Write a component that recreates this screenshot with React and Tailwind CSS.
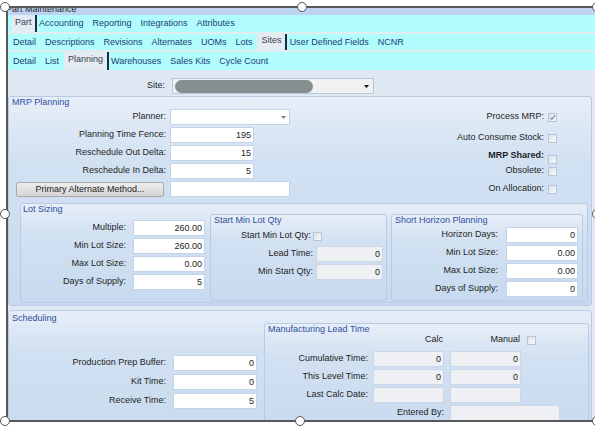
import React from "react";

const tabRows = [
  { items: ["Part", "Accounting", "Reporting", "Integrations", "Attributes"], active: 0, h: "h-[17px]" },
  {
    items: ["Detail", "Descriptions", "Revisions", "Alternates", "UOMs", "Lots", "Sites", "User Defined Fields", "NCNR"],
    active: 6,
    h: "h-[16px]",
  },
  { items: ["Detail", "List", "Planning", "Warehouses", "Sales Kits", "Cycle Count"], active: 2, h: "h-[18px]" },
];

const handles = [
  "left-[0px] top-[2px]",
  "left-[297px] top-[2px]",
  "left-[592px] top-[2px]",
  "left-[0px] top-[209px]",
  "left-[592px] top-[209px]",
  "left-[0px] top-[416px]",
  "left-[295px] top-[416px]",
  "left-[592px] top-[416px]",
];

function TabRow({ items, active, h }) {
  return (
    <div className={`${h} shrink-0 bg-[#b1fcfc] flex items-stretch pl-[4px] whitespace-nowrap`}>
      {items.map((t, i) => {
        const isActive = i === active;
        let pad = "px-[4.5px]";
        if (isActive) pad = i === 0 ? "pl-[3px] pr-[3px]" : "pl-[4.5px] pr-[3.5px]";
        else if (i === 0) pad = "pl-[1px] pr-[4.5px]";
        else if (i === active + 1) pad = "pl-[2.5px] pr-[4.5px]";
        return (
          <div
            key={t + i}
            className={`flex items-center ${pad} ${
              isActive
                ? "bg-[#e4ebf3] border-r-2 border-[#1b2c48] text-[#3a3f4a] pb-[2px]"
                : "text-[#1d3c78] pt-[1px]"
            }`}
          >
            {t}
          </div>
        );
      })}
    </div>
  );
}

function Group({ title, className = "", titleClass = "h-[10px] leading-[10px] pl-[3px]", children }) {
  return (
    <div
      className={`border border-[#b8cbe2] rounded-[3px] bg-linear-to-b from-[#e7eef8] via-[#d2e1f2] via-30% to-[#c8daef] ${className}`}
    >
      <div className={`${titleClass} text-[#2d4f9e] whitespace-nowrap`}>{title}</div>
      {children}
    </div>
  );
}

function Box({ w, value = "", disabled }) {
  return (
    <div
      className={`${w} h-[16px] shrink-0 border ${
        disabled ? "bg-[#eef0f3] border-[#cbd7e6]" : "bg-white border-[#c4d4e8]"
      } text-right pr-[2px] leading-[14px] text-[#222]`}
    >
      {value}
    </div>
  );
}

function Check({ checked, className = "" }) {
  return (
    <div
      className={`w-[9px] h-[9px] shrink-0 border border-[#b7c5d6] bg-linear-to-br from-[#dde3ea] to-[#f7f9fb] flex items-center justify-center ${className}`}
    >
      {checked && (
        <svg width="7" height="7" viewBox="0 0 7 7">
          <path d="M1 3.6 L2.8 5.4 L6 1.4" fill="none" stroke="#7d8ea8" strokeWidth="1.3" />
        </svg>
      )}
    </div>
  );
}

export default function App() {
  return (
    <div className="relative w-[595px] h-[426px] overflow-hidden bg-white font-['Liberation_Sans',Arial,sans-serif] text-[9px] text-[#1e1e1e]">
      <div className="ml-[6px] mt-[6px] w-[589px] h-[416px] border-l-2 border-t-2 border-b-2 border-[#585858] flex flex-col overflow-hidden">
        {/* window title, mostly cut off */}
        <div className="h-[7px] shrink-0 bg-[#bed2f1] overflow-hidden">
          <div className="-mt-[3px] -ml-[2px] leading-[9px] text-[#2a2a2a] whitespace-nowrap">Part Maintenance</div>
        </div>

        {/* tabs */}
        <TabRow {...tabRows[0]} />
        <div className="h-[2px] shrink-0 bg-[#e3ecee]" />
        <TabRow {...tabRows[1]} />
        <div className="h-[2px] shrink-0 bg-[#e3ecee]" />
        <TabRow {...tabRows[2]} />

        {/* content */}
        <div className="flex-1 bg-[#dfe8f3] pt-[8px] pr-[3px]">
          <div className="flex items-center h-[16px] gap-[7px]">
            <div className="w-[157px] text-right">Site:</div>
            <div className="w-[202px] h-[16px] bg-[#f1f1f1] border border-[#b6c7dc] flex items-center pl-[2px] pr-[4px]">
              <div className="w-[138px] h-[13px] rounded-full bg-[#868f8f]" />
              <div className="flex-1" />
              <svg width="5" height="3" viewBox="0 0 5 3">
                <path d="M0 0h5L2.5 3z" fill="#111" />
              </svg>
            </div>
          </div>

          {/* MRP Planning */}
          <Group title="MRP Planning" className="mt-[2px] pb-[2px]">
            <div className="flex justify-between mt-[2px]">
              <div className="flex flex-col gap-[2px]">
                <div className="flex items-center h-[16px] gap-[4px]">
                  <div className="w-[157px] text-right">Planner:</div>
                  <div className="w-[120px] h-[16px] bg-white border border-[#c4d4e8] flex items-center justify-end pr-[3px]">
                    <svg width="5" height="3" viewBox="0 0 5 3">
                      <path d="M0 0h5L2.5 3z" fill="#6c84a6" />
                    </svg>
                  </div>
                </div>
                {[
                  ["Planning Time Fence:", "195"],
                  ["Reschedule Out Delta:", "15"],
                  ["Reschedule In Delta:", "5"],
                ].map(([l, v]) => (
                  <div key={l} className="flex items-center h-[16px] gap-[4px]">
                    <div className="w-[157px] text-right">{l}</div>
                    <Box w="w-[84px]" value={v} />
                  </div>
                ))}
                <div className="flex items-center h-[16px]">
                  <button className="ml-[7px] w-[148px] h-[15px] border border-[#a9a9a9] rounded-[2px] bg-linear-to-b from-[#eeeeee] to-[#d5d5d5] text-[9px] leading-[13px] text-[#222]">
                    Primary Alternate Method...
                  </button>
                  <div className="ml-[6px]">
                    <Box w="w-[120px]" />
                  </div>
                </div>
              </div>

              <div className="flex flex-col items-end pt-[3px] mr-[34px]">
                <div className="flex items-center h-[10px] gap-[4px]">
                  <span>Process MRP:</span>
                  <Check checked />
                </div>
                <div className="flex items-center h-[10px] gap-[4px] mt-[11px]">
                  <span>Auto Consume Stock:</span>
                  <Check />
                </div>
                <div className="flex items-center h-[10px] gap-[4px] mt-[8px]">
                  <span className="font-bold">MRP Shared:</span>
                  <Check className="mt-[6px]" />
                </div>
                <div className="flex items-center h-[10px] gap-[4px] mt-[5px]">
                  <span>Obsolete:</span>
                  <Check />
                </div>
                <div className="flex items-center h-[10px] gap-[4px] mt-[8px]">
                  <span>On Allocation:</span>
                  <Check />
                </div>
              </div>
            </div>

            {/* Lot Sizing */}
            <Group
              title="Lot Sizing"
              className="mt-[6px] ml-[11px] mr-[3px] pb-[1px]"
              titleClass="h-[10px] leading-[10px] pl-[2px]"
            >
              <div className="flex">
                <div className="pt-[6px] flex flex-col gap-[2px]">
                  {[
                    ["Multiple:", "260.00"],
                    ["Min Lot Size:", "260.00"],
                    ["Max Lot Size:", "0.00"],
                    ["Days of Supply:", "5"],
                  ].map(([l, v]) => (
                    <div key={l} className="flex items-center h-[16px] gap-[7px]">
                      <div className="w-[105px] text-right">{l}</div>
                      <Box w="w-[72px]" value={v} />
                    </div>
                  ))}
                </div>

                <Group title="Start Min Lot Qty" className="ml-[5px] w-[177px] h-[87px]">
                  <div className="mt-[3px] flex flex-col gap-[2px]">
                    <div className="flex items-center h-[16px]">
                      <div className="w-[100px] text-right">Start Min Lot Qty:</div>
                      <Check className="ml-[2px]" />
                    </div>
                    <div className="flex items-center h-[16px] gap-[3px]">
                      <div className="w-[102px] text-right">Lead Time:</div>
                      <Box w="w-[67px]" value="0" disabled />
                    </div>
                    <div className="flex items-center h-[16px] gap-[3px]">
                      <div className="w-[102px] text-right">Min Start Qty:</div>
                      <Box w="w-[67px]" value="0" disabled />
                    </div>
                  </div>
                </Group>

                <Group title="Short Horizon Planning" className="ml-[4px] w-[192px] h-[87px]">
                  <div className="mt-[2px] flex flex-col gap-[2px]">
                    {[
                      ["Horizon Days:", "0"],
                      ["Min Lot Size:", "0.00"],
                      ["Max Lot Size:", "0.00"],
                      ["Days of Supply:", "0"],
                    ].map(([l, v]) => (
                      <div key={l} className="flex items-center h-[16px] gap-[8px]">
                        <div className="w-[106px] text-right">{l}</div>
                        <Box w="w-[72px]" value={v} />
                      </div>
                    ))}
                  </div>
                </Group>
              </div>
            </Group>
          </Group>

          {/* Scheduling */}
          <Group title="Scheduling" className="mt-[4px] h-[130px]" titleClass="h-[12px] pt-[2px] leading-[10px] pl-[3px]">
            <div className="flex items-start">
              <div className="w-[255px] shrink-0 pt-[32px] flex flex-col gap-[3px]">
                {[
                  ["Production Prep Buffer:", "0"],
                  ["Kit Time:", "0"],
                  ["Receive Time:", "5"],
                ].map(([l, v]) => (
                  <div key={l} className="flex items-center h-[16px] gap-[7px]">
                    <div className="w-[157px] text-right">{l}</div>
                    <Box w="w-[84px]" value={v} />
                  </div>
                ))}
              </div>

              <Group title="Manufacturing Lead Time" className="flex-1 mr-[2px] h-[110px]">
                <div className="flex items-center h-[10px] mt-[1px]">
                  <div className="w-[108px]" />
                  <div className="w-[71px] text-right pr-[1px]">Calc</div>
                  <div className="w-[77px] text-right pr-[1px]">Manual</div>
                  <Check className="ml-[6px]" />
                </div>
                <div className="mt-[6px] flex flex-col gap-[2px]">
                  {[
                    ["Cumulative Time:", "0", "0"],
                    ["This Level Time:", "0", "0"],
                    ["Last Calc Date:", "", ""],
                  ].map(([l, a, b]) => (
                    <div key={l} className="flex items-center h-[16px]">
                      <div className="w-[103px] text-right">{l}</div>
                      <div className="ml-[5px]">
                        <Box w="w-[71px]" value={a} disabled />
                      </div>
                      <div className="ml-[6px]">
                        <Box w="w-[71px]" value={b} disabled />
                      </div>
                    </div>
                  ))}
                  <div className="flex items-center h-[16px]">
                    <div className="w-[179px] text-right">Entered By:</div>
                    <div className="ml-[6px]">
                      <Box w="w-[110px]" disabled />
                    </div>
                  </div>
                </div>
              </Group>
            </div>
          </Group>
        </div>
      </div>

      {/* selection handles */}
      {handles.map((p) => (
        <div
          key={p}
          className={`absolute ${p} w-[10px] h-[10px] rounded-full bg-white border-[1.5px] border-[#555]`}
        />
      ))}
    </div>
  );
}
